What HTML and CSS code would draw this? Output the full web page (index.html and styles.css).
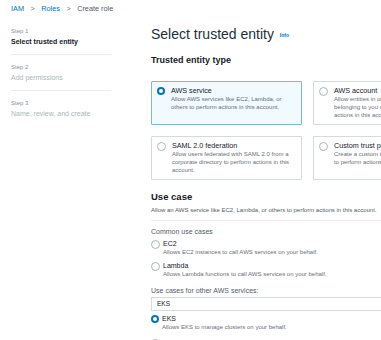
FILE: index.html
```html
<!DOCTYPE html>
<html lang="en">
<head>
    <meta charset="UTF-8">
    <title>Create role</title>
    <link rel="stylesheet" href="styles.css">
</head>
<body>

<div class="breadcrumb">
    <a href="#">IAM</a>
    <span class="sep">&gt;</span>
    <a href="#">Roles</a>
    <span class="sep">&gt;</span>
    <span class="actual">Create role</span>
</div>

<div class="pagina">
    <!-- pasos -->
    <nav class="pasos">
        <div class="paso activo">
            <div class="paso-num">Step 1</div>
            <div class="paso-nombre">Select trusted entity</div>
        </div>
        <div class="paso">
            <div class="paso-num">Step 2</div>
            <div class="paso-nombre">Add permissions</div>
        </div>
        <div class="paso">
            <div class="paso-num">Step 3</div>
            <div class="paso-nombre">Name, review, and create</div>
        </div>
    </nav>

    <main class="contenido">
        <h1>Select trusted entity <a href="#" class="info">Info</a></h1>

        <h2>Trusted entity type</h2>
        <div class="tarjetas">
            <div class="tarjeta elegida">
                <span class="radio on"></span>
                <div>
                    <div class="tarjeta-titulo">AWS service</div>
                    <div class="tarjeta-texto">Allow AWS services like EC2, Lambda, or others to perform actions in this account.</div>
                </div>
            </div>
            <div class="tarjeta">
                <span class="radio"></span>
                <div>
                    <div class="tarjeta-titulo">AWS account</div>
                    <div class="tarjeta-texto">Allow entities in other AWS accounts belonging to you or a 3rd party to perform actions in this account.</div>
                </div>
            </div>
            <div class="tarjeta">
                <span class="radio"></span>
                <div>
                    <div class="tarjeta-titulo">SAML 2.0 federation</div>
                    <div class="tarjeta-texto">Allow users federated with SAML 2.0 from a corporate directory to perform actions in this account.</div>
                </div>
            </div>
            <div class="tarjeta">
                <span class="radio"></span>
                <div>
                    <div class="tarjeta-titulo">Custom trust policy</div>
                    <div class="tarjeta-texto">Create a custom trust policy to enable others to perform actions in this account.</div>
                </div>
            </div>
        </div>

        <h2 class="uso">Use case</h2>
        <div class="uso-texto">Allow an AWS service like EC2, Lambda, or others to perform actions in this account.</div>
        <hr class="linea">

        <div class="etiqueta">Common use cases</div>
        <div class="opcion">
            <span class="radio"></span>
            <div>
                <div class="opcion-titulo">EC2</div>
                <div class="opcion-texto">Allows EC2 instances to call AWS services on your behalf.</div>
            </div>
        </div>
        <div class="opcion">
            <span class="radio"></span>
            <div>
                <div class="opcion-titulo">Lambda</div>
                <div class="opcion-texto">Allows Lambda functions to call AWS services on your behalf.</div>
            </div>
        </div>

        <div class="etiqueta otros">Use cases for other AWS services:</div>
        <div class="campo">EKS</div>
        <div class="opcion">
            <span class="radio on"></span>
            <div>
                <div class="opcion-titulo">EKS</div>
                <div class="opcion-texto">Allows EKS to manage clusters on your behalf.</div>
            </div>
        </div>
        <div class="opcion ultima">
            <span class="radio"></span>
            <div>
                <div class="opcion-titulo">EKS - Cluster</div>
                <div class="opcion-texto">Allows access to other AWS service resources that are required to operate clusters.</div>
            </div>
        </div>
    </main>
</div>

</body>
</html>
```

FILE: styles.css
```css
body {
    font-family: "Liberation Sans", Arial, sans-serif;
    margin: 0;
    background: white;
    color: #16191f;
    width: 381px;
    height: 340px;
    overflow: hidden;
}

a {
    text-decoration: none;
    color: #0073bb;
}

.breadcrumb {
    padding: 4px 11px 0;
    height: 12px;
    font-size: 7.3px;
    line-height: 10px;
    display: flex;
    gap: 6.5px;
    color: #545b64;
}

.breadcrumb .sep {
    color: #687078;
}

.pagina {
    display: flex;
}

.pasos {
    width: 100px;
    padding: 10px 0 0 11px;
    flex-shrink: 0;
}

.paso {
    padding: 0 0 7px;
    margin-bottom: 7px;
    border-bottom: 1px solid #eaeded;
}

.paso:last-child {
    border-bottom: none;
}

.paso-num {
    font-size: 6px;
    line-height: 10px;
    color: #879196;
}

.paso-nombre {
    font-size: 7px;
    line-height: 11px;
    color: #aab7b8;
}

.paso.activo .paso-nombre {
    color: #16191f;
    font-weight: bold;
}

.contenido {
    margin-left: 40px;
    flex-shrink: 0;
    width: 240px;
}

h1 {
    font-size: 14px;
    font-weight: normal;
    margin: 7px 0 0;
    line-height: 22px;
    color: #232f3e;
}

h1 .info {
    font-size: 5px;
    font-weight: bold;
    vertical-align: middle;
    margin-left: 2px;
}

h2 {
    font-size: 9px;
    margin: 7px 0 0;
    line-height: 14px;
}

.tarjetas {
    display: grid;
    grid-template-columns: 151px 151px;
    gap: 11px 11px;
    margin-top: 14px;
    width: 320px;
}

.tarjeta {
    border: 1px solid #d5dbdb;
    border-radius: 1px;
    padding: 4px 5px;
    height: 34px;
    display: flex;
    gap: 6px;
    align-items: flex-start;
}

.tarjeta.elegida {
    border-color: #7fb5e6;
    background: #f1faff;
}

.radio {
    width: 7px;
    height: 7px;
    border: 1px solid #aab7b8;
    border-radius: 50%;
    flex-shrink: 0;
    margin-top: 1px;
    background: white;
}

.radio.on {
    border: 2.5px solid #0073bb;
    width: 4px;
    height: 4px;
}

.tarjeta-titulo {
    font-size: 7.2px;
    line-height: 9px;
}

.tarjeta-texto {
    font-size: 6px;
    line-height: 8px;
    color: #687078;
}

.uso {
    font-size: 9.5px;
    margin-top: 10px;
}

.uso-texto {
    font-size: 6px;
    color: #545b64;
    line-height: 8px;
    margin-top: 2px;
}

.linea {
    border: none;
    border-top: 1px solid #eaeded;
    margin: 6px 0 0;
    width: 300px;
}

.etiqueta {
    font-size: 7px;
    color: #545b64;
    margin-top: 6px;
    line-height: 9px;
}

.opcion {
    display: flex;
    gap: 3px;
    margin-top: 3px;
    height: 19px;
}

.opcion.ultima {
    margin-top: 5px;
}

.opcion .radio {
    margin-top: 1px;
}

.opcion-titulo {
    font-size: 7px;
    line-height: 9px;
}

.opcion-texto {
    font-size: 6px;
    color: #687078;
    line-height: 8px;
}

.campo {
    border: 1px solid #d5dbdb;
    width: 300px;
    height: 12px;
    font-size: 6.5px;
    line-height: 12px;
    padding: 0 5px;
    color: #16191f;
    margin: 2px 0 1px;
}
```
